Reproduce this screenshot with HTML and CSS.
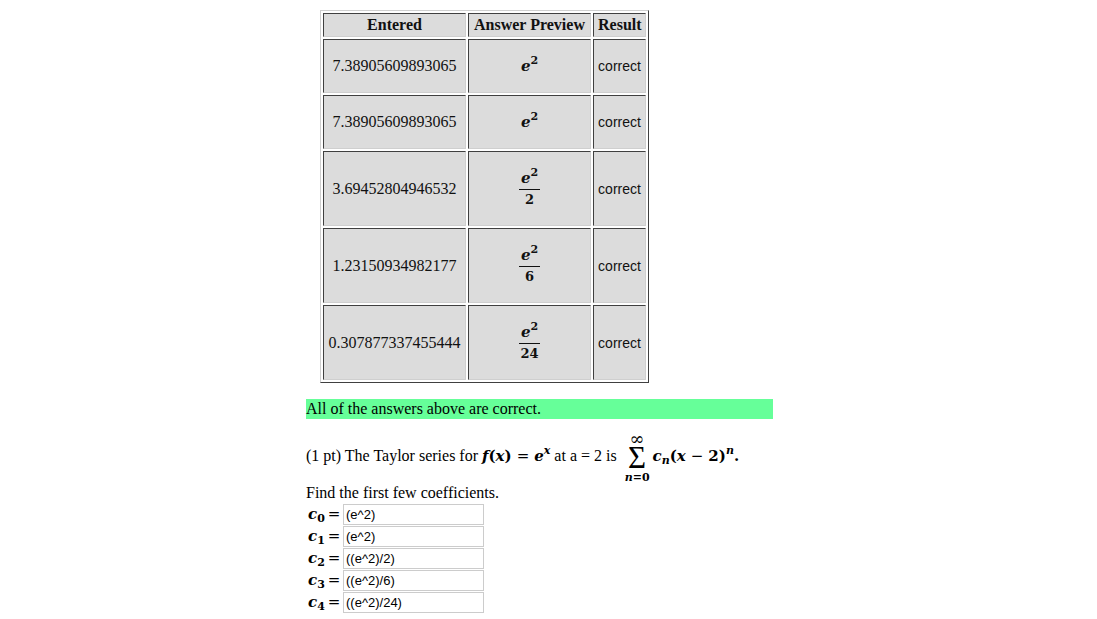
FILE: index.html
```html
<!DOCTYPE html>
<html>
<head>
<meta charset="utf-8">
<link rel="stylesheet" href="styles.css">
</head>
<body>
<div class="page">
  <table class="attempts">
    <tr class="head">
      <th class="c1">Entered</th>
      <th class="c2">Answer Preview</th>
      <th class="c3">Result</th>
    </tr>
    <tr class="r-short">
      <td>7.38905609893065</td>
      <td><span class="mv">e</span><sup class="ms">2</sup></td>
      <td class="res">correct</td>
    </tr>
    <tr class="r-short">
      <td>7.38905609893065</td>
      <td><span class="mv">e</span><sup class="ms">2</sup></td>
      <td class="res">correct</td>
    </tr>
    <tr class="r-tall">
      <td>3.69452804946532</td>
      <td><span class="frac"><span class="num"><span class="mv">e</span><sup class="ms">2</sup></span><span class="den">2</span></span></td>
      <td class="res">correct</td>
    </tr>
    <tr class="r-tall">
      <td>1.23150934982177</td>
      <td><span class="frac"><span class="num"><span class="mv">e</span><sup class="ms">2</sup></span><span class="den">6</span></span></td>
      <td class="res">correct</td>
    </tr>
    <tr class="r-tall">
      <td>0.307877337455444</td>
      <td><span class="frac"><span class="num"><span class="mv">e</span><sup class="ms">2</sup></span><span class="den">24</span></span></td>
      <td class="res">correct</td>
    </tr>
  </table>

  <div class="ok">All of the answers above are correct.</div>

  <p class="problem">(1 pt) The Taylor series for <span class="mv">f</span><span class="mp">(</span><span class="mv">x</span><span class="mp">)</span><span class="meq">=</span><span class="mv">e</span><sup class="ms mi">x</sup> at a = 2 is <span class="sum"><span class="lim-top">∞</span><span class="sigma">Σ</span><span class="lim-bot"><i>n</i>=0</span></span><span class="mv">c</span><sub class="ms mi">n</sub><span class="mp">(</span><span class="mv">x</span><span class="meq">−</span><span class="mp">2)</span><sup class="ms mi">n</sup><span class="mp">.</span></p>

  <p class="find">Find the first few coefficients.</p>

  <div class="coefs">
    <div class="crow"><span class="lab"><span class="mv">c</span><sub class="ms">0</sub><span class="meq">=</span></span><span class="inp">(e^2)</span></div>
    <div class="crow"><span class="lab"><span class="mv">c</span><sub class="ms">1</sub><span class="meq">=</span></span><span class="inp">(e^2)</span></div>
    <div class="crow"><span class="lab"><span class="mv">c</span><sub class="ms">2</sub><span class="meq">=</span></span><span class="inp">((e^2)/2)</span></div>
    <div class="crow"><span class="lab"><span class="mv">c</span><sub class="ms">3</sub><span class="meq">=</span></span><span class="inp">((e^2)/6)</span></div>
    <div class="crow"><span class="lab"><span class="mv">c</span><sub class="ms">4</sub><span class="meq">=</span></span><span class="inp">((e^2)/24)</span></div>
  </div>
</div>
</body>
</html>
```

FILE: styles.css
```css
html, body {
  background: #ffffff;
}
body {
  margin: 8px;
  font-family: "Liberation Serif", "Times New Roman", serif;
  font-size: 16px;
  color: #000;
}
.page {
  margin-left: 298px;
  width: 467px;
}

/* attempts table */
.attempts {
  margin: 2px 0 0 14px;
  border-collapse: separate;
  border-spacing: 2px;
  border: 1px solid;
  border-color: #cfcfcf #404040 #404040 #cfcfcf;
  table-layout: fixed;
  width: 329px;
}
.attempts th,
.attempts td {
  box-sizing: border-box;
  background: #dcdcdc;
  border: 1px solid;
  border-color: #404040 #cfcfcf #cfcfcf #404040;
  padding: 0 4px;
  text-align: center;
  vertical-align: middle;
  color: #111;
  white-space: nowrap;
}
.attempts th {
  font-weight: bold;
}
.c1 { width: 143px; }
.c2 { width: 123px; }
.c3 { width: 53px; }
.head { height: 24px; }
.r-short { height: 54px; }
.r-tall { height: 75px; }
.attempts td.res {
  font-family: "Liberation Sans", Arial, sans-serif;
  font-size: 14px;
}

/* math */
.mv {
  font-family: "DejaVu Serif", serif;
  font-style: italic;
  font-weight: bold;
  font-size: 15px;
}
.mp {
  font-family: "DejaVu Serif", serif;
  font-weight: bold;
  font-size: 15px;
}
.meq {
  font-family: "DejaVu Serif", serif;
  font-weight: normal;
  font-size: 15px;
  margin: 0 5px;
}
.ms {
  font-family: "DejaVu Serif", serif;
  font-weight: bold;
  font-size: 11px;
}
.mi {
  font-style: italic;
}
sup.ms {
  vertical-align: 7px;
  line-height: 0;
}
sub.ms {
  vertical-align: -3px;
  line-height: 0;
}
.frac {
  display: inline-flex;
  flex-direction: column;
  align-items: center;
  vertical-align: middle;
}
.num {
  display: block;
  line-height: 17px;
  padding: 0 2px 2px;
  border-bottom: 1px solid #111;
}
.den {
  display: block;
  font-family: "DejaVu Serif", serif;
  font-weight: bold;
  font-size: 13px;
  line-height: 18px;
  padding-top: 1px;
}

/* status bar */
.ok {
  margin-top: 16px;
  height: 20px;
  line-height: 20px;
  background: #66ff99;
}

/* problem text */
.problem {
  margin: 14px 0 0;
  line-height: 20px;
}
.sum {
  display: inline-block;
  text-align: center;
  vertical-align: -20px;
  margin: 0 3px 0 4px;
}
.lim-top {
  display: block;
  font-family: "DejaVu Serif", serif;
  font-size: 18px;
  line-height: 12px;
}
.sigma {
  display: block;
  font-family: "Liberation Serif", serif;
  font-size: 31px;
  line-height: 26px;
}
.lim-bot {
  display: block;
  font-family: "DejaVu Serif", serif;
  font-size: 11px;
  font-weight: bold;
  line-height: 14px;
}
.find {
  margin: -2px 0 0;
  line-height: 20px;
}

/* coefficient inputs */
.coefs {
  display: flex;
  flex-direction: column;
}
.crow {
  display: flex;
  align-items: center;
  height: 22px;
}
.lab {
  width: 37px;
  padding-left: 2px;
  box-sizing: border-box;
  white-space: nowrap;
}
.lab .meq {
  margin: 0 0 0 3px;
}
.inp {
  box-sizing: border-box;
  width: 141px;
  height: 21px;
  border: 1px solid #cccccc;
  padding-left: 2px;
  font-family: "Liberation Sans", Arial, sans-serif;
  font-size: 13px;
  line-height: 19px;
  color: #000;
}
```
